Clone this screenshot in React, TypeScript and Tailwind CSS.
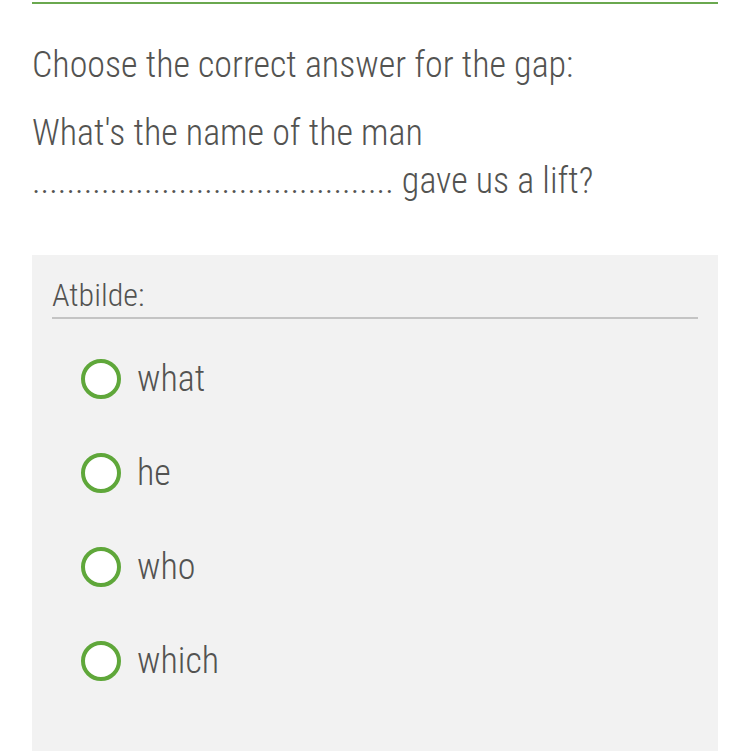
import React from "react";

const font = { fontFamily: "Roboto, 'Noto Sans', sans-serif" };

function Option({ label }: { label: string }) {
  return (
    <div className="flex items-center h-[94px]">
      <div className="w-[40px] h-[40px] rounded-full border-[4px] border-[#5fa73a] bg-white shrink-0" />
      <span className="ml-[16px] text-[36px] leading-none text-[#535351] font-light font-stretch-condensed">{label}</span>
    </div>
  );
}

export default function App() {
  return (
    <div className="w-[750px] h-[751px] bg-white overflow-hidden" style={font}>
      <div className="mx-[32px] pt-[2px]">
        <div className="h-[2px] bg-[#6aa84f]" />
        <div className="pt-[37px] text-[36px] leading-[48px] text-[#535351] font-light font-stretch-condensed">
          <p>Choose the correct answer for the gap:</p>
          <p className="mt-[20px]">What's the name of the man</p>
          <p>.......................................... gave us a lift?</p>
        </div>
        <div className="mt-[50px] bg-[#f2f2f2] h-[500px] px-[20px] pt-[22px]">
          <div className="border-b-2 border-[#c4c4c4] pb-[4px] text-[32px] leading-[36px] text-[#535351] font-light font-stretch-condensed">
            Atbilde:
          </div>
          <div className="pl-[29px] pt-[13px]">
            <Option label="what" />
            <Option label="he" />
            <Option label="who" />
            <Option label="which" />
          </div>
        </div>
      </div>
    </div>
  );
}
